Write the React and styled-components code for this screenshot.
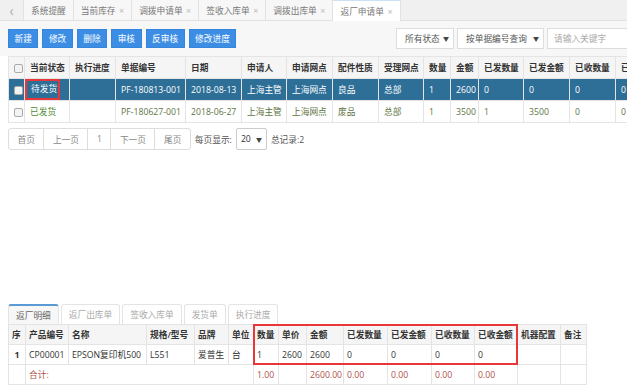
import styled, { createGlobalStyle } from "styled-components";

const GlobalStyle = createGlobalStyle`
    html, body {
        margin: 0;
        padding: 0;
        background: #fff;
        overflow: hidden;
    }
    body {
        width: 627px;
        height: 391px;
        font-family: "Open Sans", "Noto Sans CJK SC", sans-serif;
        font-size: 8.7px;
        color: #333;
    }
    * { box-sizing: border-box; }
`;

const topTabs = ["系统提醒", "当前库存", "调拨申请单", "签收入库单", "调拨出库单", "返厂申请单"];
const actions = ["新建", "修改", "删除", "审核", "反审核", "修改进度"];

const mainCols = [
    { title: "", w: 16 },
    { title: "当前状态", w: 45 },
    { title: "执行进度", w: 46 },
    { title: "单据编号", w: 70 },
    { title: "日期", w: 56 },
    { title: "申请人", w: 45 },
    { title: "申请网点", w: 46 },
    { title: "配件性质", w: 46 },
    { title: "受理网点", w: 45 },
    { title: "数量", w: 27 },
    { title: "金额", w: 28 },
    { title: "已发数量", w: 45 },
    { title: "已发金额", w: 46 },
    { title: "已收数量", w: 46 },
    { title: "已收金额", w: 46 },
];

const mainRows = [
    { selected: true, cells: ["待发货", "", "PF-180813-001", "2018-08-13", "上海主管", "上海网点", "良品", "总部", "1", "2600", "0", "0", "0", "0"] },
    { selected: false, cells: ["已发货", "", "PF-180627-001", "2018-06-27", "上海主管", "上海网点", "废品", "总部", "1", "3500", "1", "3500", "0", "0"] },
];

const detailCols = [
    { title: "序", w: 17 },
    { title: "产品编号", w: 43 },
    { title: "名称", w: 78 },
    { title: "规格/型号", w: 48 },
    { title: "品牌", w: 34 },
    { title: "单位", w: 25 },
    { title: "数量", w: 25 },
    { title: "单价", w: 28 },
    { title: "金额", w: 37 },
    { title: "已发数量", w: 44 },
    { title: "已发金额", w: 44 },
    { title: "已收数量", w: 43 },
    { title: "已收金额", w: 43 },
    { title: "机器配置", w: 43 },
    { title: "备注", w: 26 },
];

const bottomTabs = ["返厂明细", "返厂出库单", "签收入库单", "发货单", "执行进度"];

const App = () => {
    return (
        <>
            <GlobalStyle />
            <TabBar>
                <PrevButton>‹</PrevButton>
                {topTabs.map((t, i) => (
                    <Tab key={t} $active={i === topTabs.length - 1}>
                        {t}
                        {i > 0 && <Close>×</Close>}
                    </Tab>
                ))}
            </TabBar>

            <Toolbar>
                <Actions>
                    {actions.map(a => <ActionButton key={a}>{a}</ActionButton>)}
                </Actions>
                <Filters>
                    <Select $w={58}>所有状态<Arrow>▼</Arrow></Select>
                    <Select $w={87}>按单据编号查询<Arrow>▼</Arrow></Select>
                    <SearchInput placeholder="请输入关键字" />
                </Filters>
            </Toolbar>

            <Grid style={{ width: mainCols.reduce((s, c) => s + c.w, 0) }}>
                <colgroup>
                    {mainCols.map((c, i) => <col key={i} style={{ width: c.w }} />)}
                </colgroup>
                <thead>
                    <tr>
                        {mainCols.map((c, i) => (
                            <Th key={i}>{i === 0 ? <Check /> : c.title}</Th>
                        ))}
                    </tr>
                </thead>
                <tbody>
                    {mainRows.map((r, ri) => (
                        <Row key={ri} $selected={r.selected}>
                            <Td $center><Check /></Td>
                            {r.cells.map((c, ci) => (
                                <Td key={ci} $status={ci === 0 && !r.selected}>
                                    {ci === 0 && r.selected ? <Marked>{c}</Marked> : c}
                                </Td>
                            ))}
                        </Row>
                    ))}
                </tbody>
            </Grid>

            <Pager>
                <PageGroup>
                    <PageBtn>首页</PageBtn>
                    <PageBtn>上一页</PageBtn>
                    <PageBtn>1</PageBtn>
                    <PageBtn>下一页</PageBtn>
                    <PageBtn>尾页</PageBtn>
                </PageGroup>
                <PagerText>每页显示:</PagerText>
                <PageSize>20<Arrow>▼</Arrow></PageSize>
                <PagerText>总记录:2</PagerText>
            </Pager>

            <DetailSection>
                <SubTabs>
                    {bottomTabs.map((t, i) => (
                        <SubTab key={t} $active={i === 0}>{t}</SubTab>
                    ))}
                </SubTabs>
                <DetailWrap>
                    <Grid style={{ width: detailCols.reduce((s, c) => s + c.w, 0) }}>
                        <colgroup>
                            {detailCols.map((c, i) => <col key={i} style={{ width: c.w }} />)}
                        </colgroup>
                        <thead>
                            <tr>
                                {detailCols.map((c, i) => <DTh key={i}>{c.title}</DTh>)}
                            </tr>
                        </thead>
                        <tbody>
                            <tr>
                                <DTd $bold>1</DTd>
                                <DTd>CP00001</DTd>
                                <DTd>EPSON复印机500</DTd>
                                <DTd>L551</DTd>
                                <DTd>爱普生</DTd>
                                <DTd>台</DTd>
                                <DTd>1</DTd>
                                <DTd>2600</DTd>
                                <DTd>2600</DTd>
                                <DTd>0</DTd>
                                <DTd>0</DTd>
                                <DTd>0</DTd>
                                <DTd>0</DTd>
                                <DTd />
                                <DTd />
                            </tr>
                            <tr>
                                <DTd />
                                <DTd $total colSpan={5}>合计:</DTd>
                                <DTd $total>1.00</DTd>
                                <DTd $total />
                                <DTd $total>2600.00</DTd>
                                <DTd $total>0.00</DTd>
                                <DTd $total>0.00</DTd>
                                <DTd $total>0.00</DTd>
                                <DTd $total>0.00</DTd>
                                <DTd />
                                <DTd />
                            </tr>
                        </tbody>
                    </Grid>
                    <RedFrame />
                </DetailWrap>
            </DetailSection>
        </>
    );
};

export default App;


const TabBar = styled.div`
    display: flex;
    align-items: flex-end;
    height: 21px;
    background: #f0f0f0;
    border-bottom: 1px solid #e2e2e2;
`;

const PrevButton = styled.div`
    width: 24px;
    height: 20px;
    display: flex;
    align-items: center;
    justify-content: center;
    font-size: 14px;
    color: #aaa;
    border-right: 1px solid #e2e2e2;
`;

const Tab = styled.div`
    display: flex;
    align-items: center;
    gap: 3.5px;
    height: ${p => (p.$active ? "21px" : "20px")};
    margin-bottom: ${p => (p.$active ? "-1px" : "0")};
    padding: 0 7px;
    background: ${p => (p.$active ? "#fff" : "#f7f7f7")};
    border-right: 1px solid #e2e2e2;
    border-top: ${p => (p.$active ? "1px solid #cde1f5" : "none")};
    color: #777;
    white-space: nowrap;
`;

const Close = styled.span`
    color: #bbb;
    font-size: 9px;
`;

const Toolbar = styled.div`
    display: flex;
    justify-content: space-between;
    align-items: center;
    height: 35px;
    padding: 0 0 0 8px;
    background: #f7f7f7;
`;

const Actions = styled.div`
    display: flex;
    gap: 4px;
`;

const ActionButton = styled.div`
    height: 19px;
    padding: 0 5.5px;
    display: flex;
    align-items: center;
    background: #3c8ee5;
    border: 1px solid #3585da;
    color: #fff;
`;

const Filters = styled.div`
    display: flex;
    gap: 3px;
    margin-right: -10px;
`;

const Select = styled.div`
    width: ${p => p.$w}px;
    height: 21px;
    display: flex;
    align-items: center;
    justify-content: space-between;
    padding: 0 4px 0 8px;
    background: #fff;
    border: 1px solid #ddd;
    color: #555;
`;

const Arrow = styled.span`
    font-size: 6px;
    color: #444;
`;

const SearchInput = styled.input`
    width: 90px;
    height: 21px;
    padding: 0 6px;
    border: 1px solid #ddd;
    font-family: inherit;
    font-size: 8.7px;
    outline: none;
    &::placeholder { color: #aaa; }
`;

const Grid = styled.table`
    table-layout: fixed;
    border-collapse: collapse;
    margin-left: 8px;
`;

const Th = styled.th`
    height: 22px;
    padding: 0 5px;
    background: #f5f5f5;
    border: 1px solid #e4e4e4;
    text-align: left;
    font-weight: 600;
    color: #333;
    white-space: nowrap;
    overflow: hidden;
`;

const Row = styled.tr`
    background: ${p => (p.$selected ? "#2e6f98" : "#fff")};
    color: ${p => (p.$selected ? "#fff" : "#5d7443")};
`;

const Td = styled.td`
    height: 22px;
    padding: 0 5px;
    border: 1px solid #e4e4e4;
    white-space: nowrap;
    overflow: hidden;
    text-align: ${p => (p.$center ? "center" : "left")};
    color: ${p => (p.$status ? "#4f8a2c" : "inherit")};
`;

const Check = styled.span`
    display: inline-block;
    width: 9px;
    height: 9px;
    vertical-align: middle;
    background: #f3f3f3;
    border: 1px solid #aaa;
    border-radius: 2px;
`;

const Marked = styled.span`
    display: inline-block;
    width: 35px;
    margin-left: -5px;
    padding: 0 4px;
    line-height: 17px;
    border: 2px solid #e8373a;
    vertical-align: middle;
`;

const Pager = styled.div`
    display: flex;
    align-items: center;
    gap: 4px;
    margin: 5px 0 0 8px;
`;

const PageGroup = styled.div`
    display: flex;
    border: 1px solid #ddd;
    border-radius: 3px;
    overflow: hidden;
    height: 22px;
`;

const PageBtn = styled.div`
    display: flex;
    align-items: center;
    padding: 0 8.5px;
    color: #888;
    border-right: 1px solid #ddd;
    &:last-child { border-right: none; }
`;

const PagerText = styled.span`
    color: #555;
`;

const PageSize = styled.div`
    width: 31px;
    height: 22px;
    display: flex;
    align-items: center;
    justify-content: space-between;
    padding: 0 4px;
    border: 1px solid #ccc;
    border-radius: 2px;
    color: #333;
`;

const DetailSection = styled.div`
    margin-top: 154px;
`;

const SubTabs = styled.div`
    display: flex;
    gap: 2px;
    margin-left: 8px;
    height: 20px;
    align-items: flex-end;
`;

const SubTab = styled.div`
    height: 20px;
    display: flex;
    align-items: center;
    padding: 0 7px;
    border: 1px solid #e4e4e4;
    border-bottom: none;
    border-top: ${p => (p.$active ? "2px solid #5b9bd5" : "1px solid #e4e4e4")};
    border-radius: 3px 3px 0 0;
    background: ${p => (p.$active ? "#f7f7f7" : "#fff")};
    color: ${p => (p.$active ? "#666" : "#aaa")};
`;

const DetailWrap = styled.div`
    position: relative;
`;

const DTh = styled(Th)`
    height: 20px;
    padding: 0 3px;
`;

const DTd = styled.td`
    height: 20px;
    padding: 0 3px;
    border: 1px solid #e4e4e4;
    white-space: nowrap;
    overflow: hidden;
    font-weight: ${p => (p.$bold ? 700 : 400)};
    color: ${p => (p.$total ? "#b0524a" : "#333")};
    text-align: ${p => (p.$bold ? "center" : "left")};
`;

const RedFrame = styled.div`
    position: absolute;
    left: 253px;
    top: 0;
    width: 265px;
    height: 41px;
    border: 2px solid #e8373a;
    pointer-events: none;
`;
